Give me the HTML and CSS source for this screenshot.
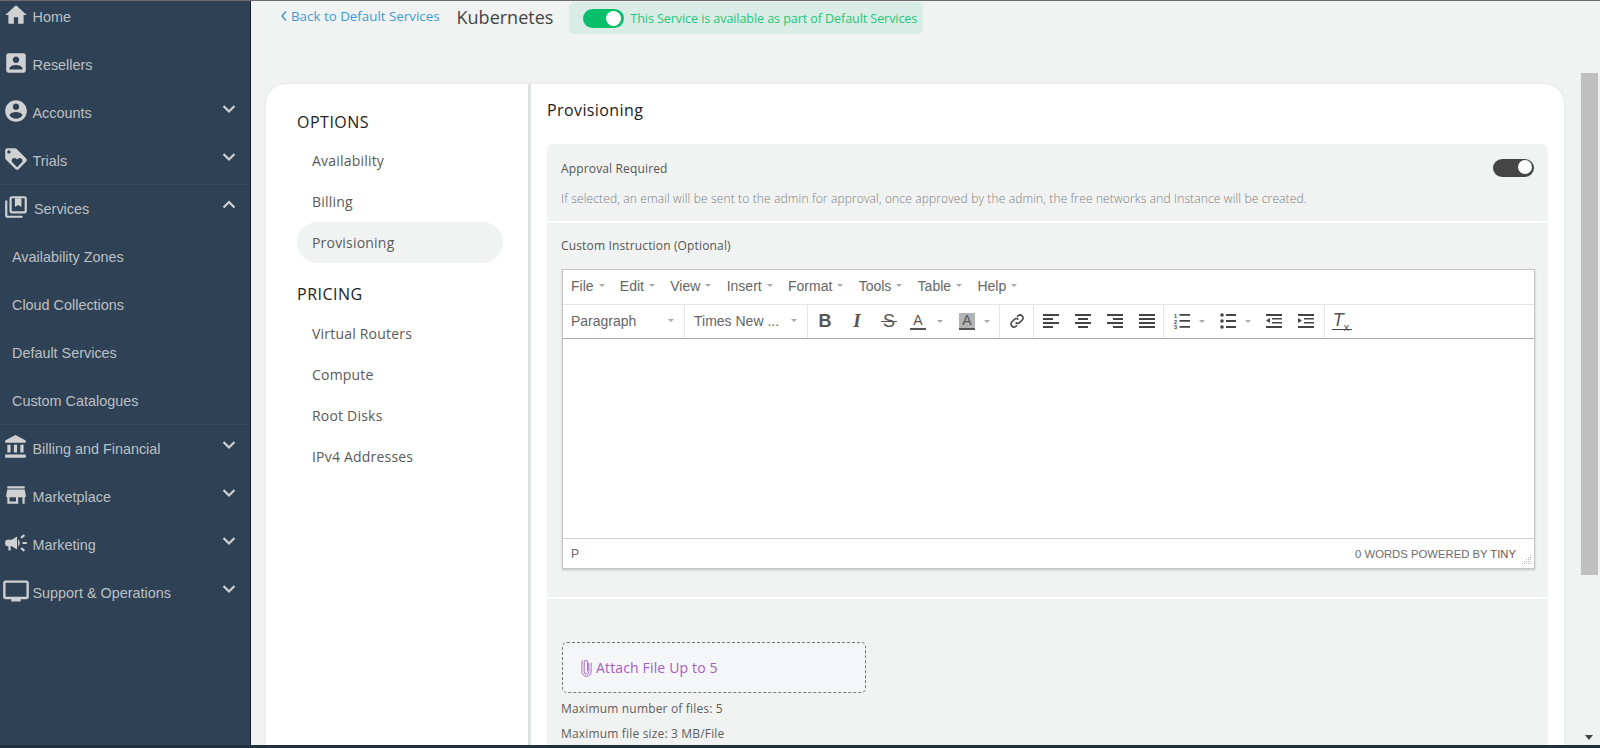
FILE: index.html
```html
<!DOCTYPE html>
<html lang="en">
<head>
<meta charset="utf-8">
<title>Kubernetes</title>
<link rel="stylesheet" href="styles.css">
</head>
<body>
<div class="topline"></div>
<div class="app">
  <aside class="side">
    <nav class="nav">
      <a class="row"><svg class="ic" viewBox="0 0 24 24"><path d="M10 20v-6h4v6h5v-8h3L12 3 2 12h3v8z"/></svg><span>Home</span></a>
      <a class="row"><svg class="ic" viewBox="0 0 24 24"><path d="M3 5v14c0 1.100.89 2 2 2h14c1.100 0 2-.9 2-2V5c0-1.100-.9-2-2-2H5c-1.110 0-2 .9-2 2zm12 4c0 1.660-1.340 3-3 3s-3-1.340-3-3 1.340-3 3-3 3 1.340 3 3zm-9 8c0-2 4-3.100 6-3.100s6 1.100 6 3.100v1H6v-1z"/></svg><span>Resellers</span></a>
      <a class="row"><svg class="ic" viewBox="0 0 24 24"><path d="M12 2C6.480 2 2 6.480 2 12s4.480 10 10 10 10-4.480 10-10S17.520 2 12 2zm0 3c1.660 0 3 1.340 3 3s-1.340 3-3 3-3-1.340-3-3 1.340-3 3-3zm0 14.200c-2.500 0-4.710-1.280-6-3.220.03-1.990 4-3.080 6-3.080 1.990 0 5.970 1.090 6 3.080-1.290 1.940-3.500 3.220-6 3.220z"/></svg><span>Accounts</span><svg class="chev" viewBox="0 0 14 10"><path d="M1.500 2L7 7.500 12.500 2"/></svg></a>
      <a class="row"><svg class="ic" viewBox="0 0 24 24"><path d="M21.410 11.580l-9-9C12.050 2.220 11.550 2 11 2H4c-1.100 0-2 .9-2 2v7c0 .55.22 1.050.59 1.420l9 9c.36.36.86.58 1.410.58s1.050-.22 1.410-.59l7-7c.37-.36.59-.86.59-1.410s-.23-1.060-.59-1.420zM5.500 7C4.670 7 4 6.330 4 5.500S4.670 4 5.500 4 7 4.670 7 5.500 6.330 7 5.500 7zm11.770 8.270L13 19.540l-4.270-4.270C8.280 14.810 8 14.190 8 13.500c0-1.380 1.120-2.500 2.500-2.500.69 0 1.320.28 1.770.74l.73.72.73-.73c.45-.45 1.080-.73 1.770-.73 1.380 0 2.500 1.120 2.500 2.500 0 .69-.28 1.320-.73 1.770z"/></svg><span>Trials</span><svg class="chev" viewBox="0 0 14 10"><path d="M1.500 2L7 7.500 12.500 2"/></svg></a>
      <a class="row row-line"><svg class="ic ic-svc" viewBox="0 0 24 24"><path d="M4 6H2v14c0 1.100.9 2 2 2h14v-2H4V6z"/><path fill-rule="evenodd" d="M20 2H8c-1.100 0-2 .9-2 2v12c0 1.100.9 2 2 2h12c1.100 0 2-.9 2-2V4c0-1.100-.9-2-2-2zm0 14H8V4h12v12z"/><path d="M11 4h6v8l-3-1.800L11 12z"/></svg><span>Services</span><svg class="chev" viewBox="0 0 14 10"><path d="M1.500 7.500L7 2l5.500 5.500"/></svg></a>
      <a class="row sub">Availability Zones</a>
      <a class="row sub">Cloud Collections</a>
      <a class="row sub">Default Services</a>
      <a class="row sub">Custom Catalogues</a>
      <a class="row row-line"><svg class="ic" viewBox="0 0 24 24"><path d="M4 10v7h3v-7H4zm6 0v7h3v-7h-3zM2 22h19v-3H2v3zm14-12v7h3v-7h-3zm-4.500-9L2 6v2h19V6l-9.500-5z"/></svg><span>Billing and Financial</span><svg class="chev" viewBox="0 0 14 10"><path d="M1.500 2L7 7.500 12.500 2"/></svg></a>
      <a class="row"><svg class="ic" viewBox="0 0 24 24"><path d="M20 4H4v2h16V4zm1 10v-2l-1-5H4l-1 5v2h1v6h10v-6h4v6h2v-6h1zm-9 4H6v-4h6v4z"/></svg><span>Marketplace</span><svg class="chev" viewBox="0 0 14 10"><path d="M1.500 2L7 7.500 12.500 2"/></svg></a>
      <a class="row"><svg class="ic" viewBox="0 0 24 24"><path d="M18 11v2h4v-2h-4zm-2 6.610c.96.71 2.210 1.650 3.200 2.390.4-.53.8-1.070 1.200-1.600-.99-.74-2.240-1.680-3.200-2.400-.4.54-.8 1.080-1.200 1.610zM20.400 5.600c-.4-.53-.8-1.070-1.200-1.600-.99.74-2.240 1.680-3.200 2.400.4.53.8 1.070 1.200 1.600.96-.72 2.210-1.650 3.200-2.400zM4 9c-1.100 0-2 .9-2 2v2c0 1.100.9 2 2 2h1v4h2v-4h1l5 3V6L8 9H4zm11.500 3c0-1.330-.58-2.530-1.500-3.350v6.690c.92-.81 1.500-2.010 1.500-3.340z"/></svg><span>Marketing</span><svg class="chev" viewBox="0 0 14 10"><path d="M1.500 2L7 7.500 12.500 2"/></svg></a>
      <a class="row"><svg class="ic ic-mon" viewBox="0 0 24 24"><path d="M21 3H3c-1.100 0-2 .9-2 2v12c0 1.100.9 2 2 2h5v2h8v-2h5c1.100 0 2-.9 2-2V5c0-1.100-.9-2-2-2zm0 14H3V5h18v12z"/></svg><span>Support &amp; Operations</span><svg class="chev" viewBox="0 0 14 10"><path d="M1.500 2L7 7.500 12.500 2"/></svg></a>
    </nav>
  </aside>

  <main class="main">
    <header class="head">
      <a class="back"><svg class="back-ic" viewBox="0 0 8 12"><path d="M6 1.500L2 6l4 4.500"/></svg>Back to Default Services</a>
      <h1 class="name">Kubernetes</h1>
      <div class="banner"><span class="tog tog-green"></span><span class="banner-txt">This Service is available as part of Default Services</span></div>
    </header>

    <section class="card">
      <div class="opts">
        <h2 class="opt-title">OPTIONS</h2>
        <a class="opt">Availability</a>
        <a class="opt">Billing</a>
        <a class="opt opt-on">Provisioning</a>
        <h2 class="opt-title opt-title-2">PRICING</h2>
        <a class="opt">Virtual Routers</a>
        <a class="opt">Compute</a>
        <a class="opt">Root Disks</a>
        <a class="opt">IPv4 Addresses</a>
      </div>

      <div class="panel">
        <h2 class="panel-title">Provisioning</h2>
        <div class="block block-a">
          <div class="approve">
            <span class="lbl">Approval Required</span>
            <span class="tog tog-dark"></span>
          </div>
          <p class="desc">If selected, an email will be sent to the admin for approval, once approved by the admin, the free networks and Instance will be created.</p>
        </div>

        <div class="block block-b">
          <div class="lbl lbl-ci">Custom Instruction (Optional)</div>
          <div class="editor">
            <div class="menubar">
              <span class="mi">File<i class="caret"></i></span>
              <span class="mi">Edit<i class="caret"></i></span>
              <span class="mi">View<i class="caret"></i></span>
              <span class="mi">Insert<i class="caret"></i></span>
              <span class="mi">Format<i class="caret"></i></span>
              <span class="mi">Tools<i class="caret"></i></span>
              <span class="mi">Table<i class="caret"></i></span>
              <span class="mi">Help<i class="caret"></i></span>
            </div>
            <div class="toolbar">
              <div class="grp sel sel-p"><span>Paragraph</span><i class="caret"></i></div>
              <div class="grp sel sel-f"><span>Times New ...</span><i class="caret"></i></div>
              <div class="grp g-fmt">
                <span class="tb g-b">B</span>
                <span class="tb g-i">I</span>
                <span class="tb g-s">S</span>
                <span class="tb tb-split tb-fc"><span class="g-a">A</span><i class="caret"></i></span>
                <span class="tb tb-split"><span class="g-a g-h">A</span><i class="caret"></i></span>
              </div>
              <div class="grp g-link">
                <span class="tb"><svg class="ti ti-link" viewBox="0 0 16 16"><path d="M6.600 9.400a3 3 0 0 0 4.200 0l2.600-2.600a3 3 0 0 0-4.200-4.200L8 3.800"/><path d="M9.400 6.600a3 3 0 0 0-4.200 0l-2.600 2.600a3 3 0 0 0 4.200 4.200L8 12.200"/></svg></span>
              </div>
              <div class="grp g-align">
                <span class="tb"><svg class="ti" viewBox="0 0 16 16"><path d="M0 1h16v2H0zM0 5h10v2H0zM0 9h16v2H0zM0 13h10v2H0z"/></svg></span>
                <span class="tb"><svg class="ti" viewBox="0 0 16 16"><path d="M0 1h16v2H0zM3 5h10v2H3zM0 9h16v2H0zM3 13h10v2H3z"/></svg></span>
                <span class="tb"><svg class="ti" viewBox="0 0 16 16"><path d="M0 1h16v2H0zM6 5h10v2H6zM0 9h16v2H0zM6 13h10v2H6z"/></svg></span>
                <span class="tb"><svg class="ti" viewBox="0 0 16 16"><path d="M0 1h16v2H0zM0 5h16v2H0zM0 9h16v2H0zM0 13h16v2H0z"/></svg></span>
              </div>
              <div class="grp g-list">
                <span class="tb tb-split"><svg class="ti" viewBox="0 0 16 16"><path d="M5.500 1h10.500v1.800H5.500zM5.500 7h10.500v1.800H5.500zM5.500 13h10.500v1.800H5.500z"/><text class="num" x="0" y="5">1</text><text class="num" x="0" y="10.500">2</text><text class="num" x="0" y="16">3</text></svg><i class="caret"></i></span>
                <span class="tb tb-split"><svg class="ti" viewBox="0 0 16 16"><circle cx="2" cy="2" r="1.800"/><circle cx="2" cy="8" r="1.800"/><circle cx="2" cy="14" r="1.800"/><path d="M6 1h10v2H6zM6 7h10v2H6zM6 13h10v2H6z"/></svg><i class="caret"></i></span>
                <span class="tb"><svg class="ti" viewBox="0 0 16 16"><path d="M0 1h16v2H0zM6 5h10v1.500H6zM6 9h10v1.500H6zM0 13h16v2H0zM4 5v5L0 7.500z"/></svg></span>
                <span class="tb"><svg class="ti" viewBox="0 0 16 16"><path d="M0 1h16v2H0zM6 5h10v1.500H6zM6 9h10v1.500H6zM0 13h16v2H0zM0 5v5l4-2.500z"/></svg></span>
              </div>
              <div class="grp g-clear">
                <span class="tb"><span class="g-tx">T<sub class="g-x">x</sub></span></span>
              </div>
            </div>
            <div class="edit-area"></div>
            <div class="status">
              <span class="status-p">P</span>
              <span class="status-r">0 WORDS POWERED BY <em class="tiny">TINY</em></span>
              <svg class="grip" viewBox="0 0 10 10"><path d="M8 0h1v1H8zM8 2h1v1H8zM6 2h1v1H6zM8 4h1v1H8zM6 4h1v1H6zM4 4h1v1H4zM8 6h1v1H8zM6 6h1v1H6zM4 6h1v1H4zM2 6h1v1H2zM8 8h1v1H8zM6 8h1v1H6zM4 8h1v1H4zM2 8h1v1H2zM0 8h1v1H0z"/></svg>
            </div>
          </div>
        </div>

        <div class="block block-c">
          <div class="attach">
            <svg class="clip" viewBox="0 0 12 20"><path d="M8.500 5v9.500a2.500 2.500 0 0 1-5 0V4a1.800 1.800 0 0 1 3.600 0v10"/><path d="M11 5v10a5 4.500 0 0 1-10 0V4a3 3 0 0 1 1-2"/></svg>
            <span>Attach File Up to 5</span>
          </div>
          <p class="hint">Maximum number of files: 5</p>
          <p class="hint">Maximum file size: 3 MB/File</p>
        </div>
      </div>
    </section>
  </main>

  <div class="sbar">
    <div class="thumb"></div>
    <i class="arrow"></i>
  </div>
</div>
<div class="botline"></div>
</body>
</html>
```
FILE: styles.css
```css
* { box-sizing: border-box; }
html, body { height: 100%; }
body {
  margin: 0;
  height: 748px;
  overflow: hidden;
  display: flex;
  flex-direction: column;
  background: #f1f3f2;
  font-family: "Open Sans", sans-serif;
  color: #555;
}
.topline { height: 1px; background: #6b6b6b; flex: none; }
.botline { height: 3px; background: #20303f; flex: none; }
.app { flex: 1; min-height: 0; display: flex; }

/* sidebar */
.side {
  width: 251px;
  flex: none;
  background: #2f4154;
  border-right: 1px solid #161b30;
  overflow: hidden;
  font-family: "Liberation Sans", Arial, sans-serif;
  font-size: 14.400px;
  color: #bcc0c4;
}
.nav { margin-top: -8px; }
.row {
  height: 48px;
  display: flex;
  align-items: center;
  padding: 0 14px 0 3px;
  position: relative;
}
.row-line { box-shadow: 0 -1px 0 #3a4b5d; }
.row span { margin-left: 3.500px; }
.ic { width: 26px; height: 26px; fill: #cfd1d3; margin-bottom: 4px; flex: none; }
.ic-svc { margin-right: 1.500px; }
.ic-mon { width: 28px; height: 28px; margin-left: -1px; margin-right: -1px; }
.chev {
  width: 14px;
  height: 10px;
  margin-left: auto;
  margin-bottom: 8px;
  fill: none;
  stroke: #cfd1d3;
  stroke-width: 2.200;
  flex: none;
}
.sub { padding-left: 12px; }

/* main */
.main {
  flex: 1;
  min-width: 0;
  display: flex;
  flex-direction: column;
  padding: 0 17px 0 15px;
}
.head {
  height: 83px;
  flex: none;
  display: flex;
  align-items: flex-start;
  padding: 1px 0 0 14px;
}
.back {
  display: flex;
  align-items: center;
  margin-top: 4px;
  font-size: 13.350px;
  line-height: 20px;
  color: #3c9bd6;
}
.back-ic { width: 8px; height: 12px; margin-right: 3px; fill: none; stroke: #3c9bd6; stroke-width: 1.500; }
.name {
  margin: 1px 0 0 17px;
  font-size: 18px;
  line-height: 28px;
  font-weight: 400;
  color: #444;
}
.banner {
  margin-left: 16px;
  width: 354px;
  height: 32px;
  display: flex;
  align-items: center;
  padding-left: 14px;
  background: #d9ede6;
  border-radius: 5px;
  color: #1ec77a;
}
.banner-txt { font-size: 12.600px; letter-spacing: -.1px; white-space: nowrap; }
.banner .tog { margin-right: 6px; }
.tog {
  display: block;
  position: relative;
  border-radius: 10px;
  flex: none;
}
.tog::after {
  content: "";
  position: absolute;
  background: #fff;
  border-radius: 50%;
}
.tog-green { width: 41px; height: 19px; background: #0abf6b; }
.tog-green::after { width: 15px; height: 15px; top: 2px; right: 3px; }
.tog-dark { width: 41px; height: 18px; background: #454545; margin-right: -1px; }
.tog-dark::after { width: 14px; height: 14px; top: 1px; right: 2px; }

.card {
  flex: 1;
  min-height: 0;
  display: flex;
  background: #fff;
  border-radius: 20px 20px 0 0;
  box-shadow: 0 0 3px rgba(0,0,0,.08);
  overflow: hidden;
}
.opts {
  width: 265px;
  flex: none;
  padding: 27px 25px 0 31px;
  border-right: 3px solid #dfe1e1;
}
.opt-title {
  margin: 0 0 7px;
  font-size: 16px;
  line-height: 22px;
  font-weight: 400;
  letter-spacing: .5px;
  color: #222;
}
.opt-title-2 { margin: 20px 0 8px; }
.opt {
  display: block;
  height: 41px;
  line-height: 41px;
  padding-left: 15px;
  font-size: 14px;
  letter-spacing: .2px;
  color: #5a5a5a;
  border-radius: 21px;
}
.opt-on { background: #f1f3f2; }

.panel { flex: 1; min-width: 0; padding: 14px 16px 0 16px; }
.panel-title {
  margin: 0 0 22px;
  font-size: 16px;
  line-height: 24px;
  font-weight: 400;
  letter-spacing: .4px;
  color: #222;
}
.block { background: #f1f3f2; padding: 0 15px 0 14px; }
.block-a { height: 77px; margin-bottom: 2px; padding-top: 15px; border-radius: 6px 6px 0 0; }
.approve { display: flex; justify-content: space-between; align-items: center; height: 18px; }
.lbl { font-size: 12px; line-height: 18px; color: #555; letter-spacing: .15px; }
.approve .lbl { margin-top: 2px; }
.desc { margin: 13px 0 0; font-size: 12px; line-height: 18px; color: #7c7c7c; letter-spacing: .14px; font-weight: 300; }
.block-b { height: 374px; margin-bottom: 2px; padding-top: 14px; }
.lbl-ci { margin-bottom: 14px; }

.editor {
  margin-left: 1px;
  margin-right: -2px;
  height: 300px;
  display: flex;
  flex-direction: column;
  background: #fff;
  border: 1px solid #c5c5c5;
  box-shadow: 0 1px 2px rgba(0,0,0,.2);
  font-family: "Liberation Sans", Arial, sans-serif;
  font-size: 14px;
  color: #666;
}
.menubar {
  height: 35px;
  flex: none;
  display: flex;
  align-items: center;
  padding: 0 0 3px 8px;
  border-bottom: 1px solid #e4e4e4;
}
.mi { display: flex; align-items: center; margin-right: 15.300px; }
.caret {
  display: block;
  width: 0;
  height: 0;
  margin-left: 5px;
  border-style: solid;
  border-width: 3px 3.500px 0;
  border-color: #aaa transparent transparent;
  flex: none;
}
.toolbar {
  height: 34px;
  flex: none;
  display: flex;
  border-bottom: 1px solid #a9a9a9;
}
.grp { display: flex; align-items: center; border-right: 1px solid #e4e4e4; height: 100%; }
.sel { padding: 0 10px 2px 8px; justify-content: space-between; }
.sel-p { width: 122px; }
.sel-f { width: 123px; padding-left: 9px; }
.g-fmt { padding: 0 0 0 1px; width: 192px; }
.g-link { width: 34px; justify-content: center; }
.g-align { width: 130px; padding-left: 1px; }
.g-list { width: 161px; padding-left: 2px; }
.g-clear { border-right: 0; padding-left: 1px; }
.tb {
  width: 32px;
  height: 100%;
  display: flex;
  align-items: center;
  justify-content: center;
  color: #555;
  font-size: 17px;
  flex: none;
  padding-bottom: 1px;
}
.tb-split { width: 46px; justify-content: flex-start; padding-left: 8px; }
.tb-split .caret { margin-left: 9px; }
.tb-fc { padding-left: 5px; }
.tb-fc .caret { margin-left: 11px; }
.g-b { font-weight: 700; font-size: 18px; }
.g-i { font-style: italic; font-weight: 700; font-family: "Liberation Serif", serif; font-size: 19px; }
.g-s { font-size: 18px; position: relative; }
.g-s::after {
  content: "";
  position: absolute;
  left: 8px;
  right: 8px;
  top: 16px;
  height: 1px;
  background: #555;
}
.g-a {
  width: 16px;
  text-align: center;
  font-size: 14px;
  line-height: 15px;
  border-bottom: 2px solid #555;
}
.g-h { background: #b4b4b4; }
.ti { width: 16px; height: 16px; fill: #444; display: block; flex: none; }
.ti-link { fill: none; stroke: #444; stroke-width: 1.500; }
.num { font: 700 5.500px "Liberation Sans", sans-serif; fill: #444; }
.g-tx {
  font-style: italic;
  font-size: 18px;
  line-height: 17px;
  border-bottom: 1.500px solid #444;
  padding: 0 3px 0 1px;
}
.g-x { font-size: 11px; line-height: 0; font-style: normal; }
.edit-area { flex: 1; min-height: 0; }
.status {
  height: 30px;
  flex: none;
  display: flex;
  align-items: center;
  justify-content: space-between;
  padding: 0 18px 0 8px;
  border-top: 1px solid #cfcfcf;
  font-size: 11.300px;
  color: #6b6b6b;
  position: relative;
}
.status-p { font-size: 12px; }
.tiny { font-style: normal; color: #77534d; }
.grip { position: absolute; right: 2px; bottom: 3px; width: 10px; height: 10px; fill: #b5b5b5; }

.block-c { height: 200px; padding-top: 43px; }
.attach {
  margin-left: 1px;
  width: 304px;
  height: 51px;
  display: flex;
  align-items: center;
  padding-left: 18px;
  background: #f5f6f8;
  border: 1px dashed #777;
  border-radius: 5px;
  font-size: 14px;
  letter-spacing: .15px;
  color: #a65cc2;
  margin-bottom: 3px;
}
.clip { width: 11px; height: 19px; margin-right: 4px; fill: none; stroke: #a65cc2; stroke-width: 1; }
.hint { margin: 0; font-size: 12px; line-height: 25px; color: #5e5e5e; letter-spacing: .17px; }

/* scrollbar */
.sbar { width: 19px; flex: none; position: relative; padding: 72px 2px 0 0; }
.thumb { height: 502px; background: #bfbfbf; }
.arrow {
  position: absolute;
  left: 4px;
  bottom: 5px;
  width: 0;
  height: 0;
  border-style: solid;
  border-width: 5px 4.500px 0;
  border-color: #444 transparent transparent;
}
```
